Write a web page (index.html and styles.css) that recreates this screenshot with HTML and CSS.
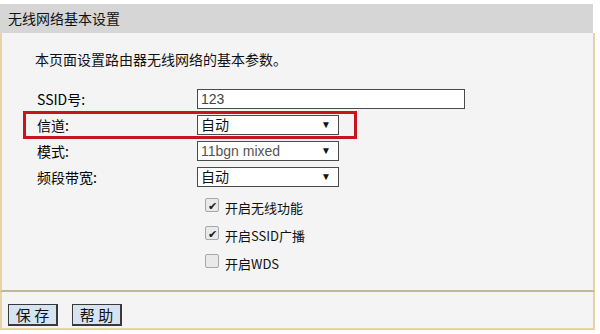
FILE: index.html
```html
<!DOCTYPE html>
<html lang="zh-CN">
<head>
    <meta charset="UTF-8">
    <meta name="viewport" content="width=device-width, initial-scale=1.0">
    <title>无线网络基本设置</title>
    <link rel="stylesheet" href="styles.css">
</head>
<body>
    <div class="panel">
        <div class="title">无线网络基本设置</div>
        <div class="content">
            <p class="desc">本页面设置路由器无线网络的基本参数。</p>
            <div class="form">
                <div class="row">
                    <span class="label">SSID号:</span>
                    <div class="textbox">123</div>
                </div>
                <div class="row hl">
                    <span class="label">信道:</span>
                    <div class="select"><span>自动</span><span class="arrow">▼</span></div>
                </div>
                <div class="row">
                    <span class="label">模式:</span>
                    <div class="select dim"><span>11bgn mixed</span><span class="arrow">▼</span></div>
                </div>
                <div class="row">
                    <span class="label">频段带宽:</span>
                    <div class="select"><span>自动</span><span class="arrow">▼</span></div>
                </div>
            </div>
            <div class="checks">
                <label class="check"><span class="box on">✔</span>开启无线功能</label>
                <label class="check"><span class="box on">✔</span>开启SSID广播</label>
                <label class="check"><span class="box"></span>开启WDS</label>
            </div>
        </div>
        <div class="footer">
            <button class="btn">保 存</button>
            <button class="btn">帮 助</button>
        </div>
    </div>
</body>
</html>
```

FILE: styles.css
```css
body{
    margin: 0;
    background-color: #ffffff;
    font-family: "Noto Sans CJK SC", "Liberation Sans", sans-serif;
    color: #111;
}
.panel{
    width: 595px;
    padding-top: 4px;
}
.title{
    height: 29px;
    line-height: 29px;
    background-color: #d6d6d6;
    padding-left: 8px;
    font-size: 14px;
    margin-right: 2px;
}
.content{
    background-color: #f4f4f4;
    border-left: 2px solid #e6d3a6;
    border-right: 2px solid #e6d3a6;
    border-bottom: 2px solid #c3b595;
    height: 257px;
    padding-left: 25px;
}
.desc{
    margin: 0;
    padding-top: 16px;
    padding-left: 8px;
    font-size: 14px;
    line-height: 20px;
}
.form{
    display: flex;
    flex-direction: column;
    gap: 6px;
    margin-top: 20px;
}
.row{
    display: flex;
    align-items: center;
    height: 20px;
    padding-left: 10px;
    width: 316px;
}
.row.hl{
    outline: 3px solid #c8141c;
    outline-offset: 1px;
}
.label{
    width: 160px;
    font-size: 14px;
    flex-shrink: 0;
    color: #000;
}
.textbox, .select{
    height: 18px;
    border: 1px solid #4a4a4a;
    background-color: #ffffff;
    font-family: "Liberation Sans", "Noto Sans CJK SC", sans-serif;
    font-size: 14px;
    line-height: 18px;
    padding-left: 3px;
    box-sizing: content-box;
}
.textbox{
    width: 263px;
    color: #444;
    flex-shrink: 0;
}
.select{
    width: 134px;
    display: flex;
    justify-content: space-between;
    padding-right: 3px;
}
.select.dim{
    color: #555;
}
.arrow{
    font-size: 10px;
    color: #111;
    padding-right: 4px;
}
.checks{
    display: flex;
    flex-direction: column;
    gap: 8px;
    margin-top: 10px;
    padding-left: 178px;
}
.check{
    display: flex;
    align-items: center;
    gap: 6px;
    height: 20px;
    font-size: 13px;
}
.box{
    width: 12px;
    height: 12px;
    border: 1px solid #a8a8a8;
    border-radius: 2px;
    background-color: #e9e9e9;
    font-size: 11px;
    line-height: 12px;
    text-align: center;
    color: #1a1a1a;
    margin-top: -4px;
}
.footer{
    background-color: #f4f4f4;
    border-left: 2px solid #e6d3a6;
    border-right: 2px solid #e6d3a6;
    border-bottom: 2px solid #e6d3a6;
    height: 36px;
    display: flex;
    align-items: flex-end;
    gap: 14px;
    padding-left: 6px;
}
.btn{
    width: 50px;
    height: 22px;
    margin-bottom: 2px;
    background-color: #d6e4f1;
    border: 1px solid #3a3a3a;
    border-right-width: 2px;
    border-bottom-width: 2px;
    font-family: "Noto Sans CJK SC", sans-serif;
    font-size: 15px;
    line-height: 18px;
    padding: 0;
    color: #111;
}
```
